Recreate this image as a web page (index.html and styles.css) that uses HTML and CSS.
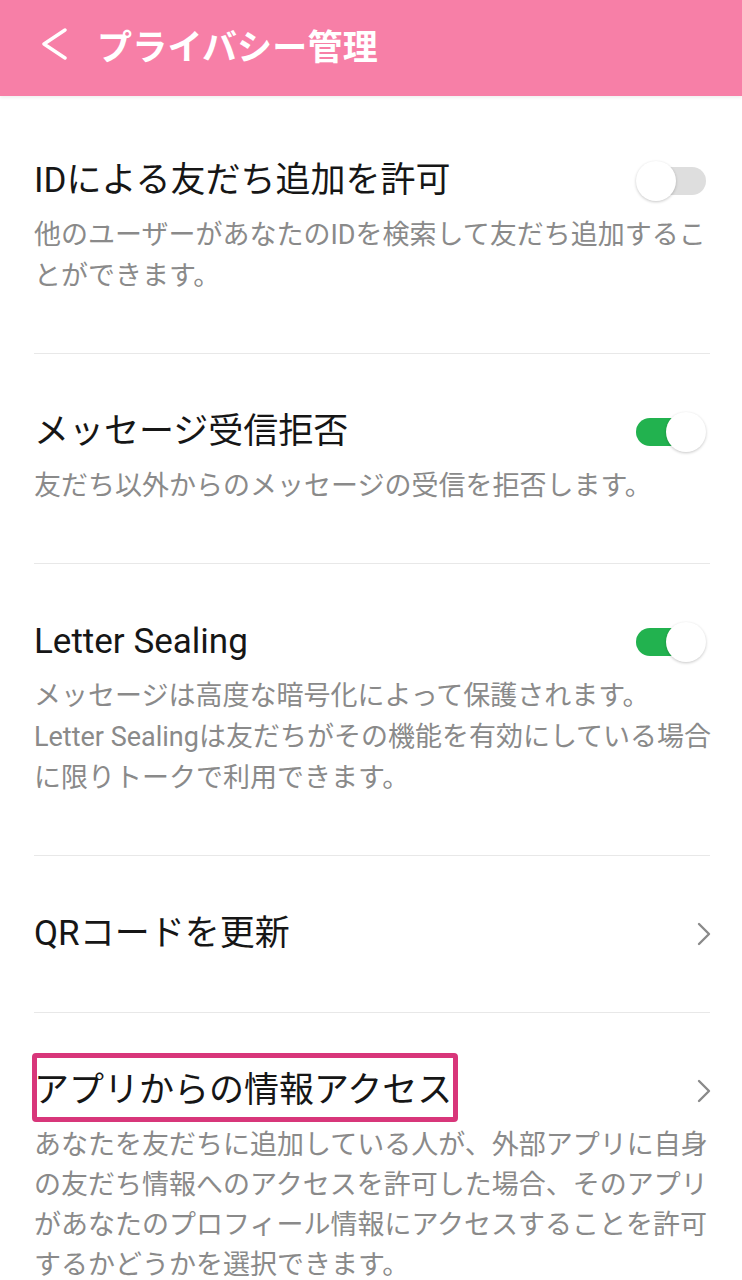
FILE: index.html
```html
<!DOCTYPE html>
<html lang="ja">
<head>
  <meta charset="UTF-8">
  <title>プライバシー管理</title>
  <link rel="stylesheet" href="styles.css">
</head>
<body>
  <header class="app-bar">
    <span class="back">
      <svg width="30" height="32" viewBox="0 0 30 32"><path d="M25 2 L4 16 L25 30" fill="none" stroke="#fff" stroke-width="3.4" stroke-linecap="round" stroke-linejoin="round"/></svg>
    </span>
    <h1 class="app-title">プライバシー管理</h1>
  </header>

  <ul class="settings">
    <li class="setting first">
      <div class="setting-head">
        <span class="setting-title">IDによる友だち追加を許可</span>
        <span class="switch"></span>
      </div>
      <p class="setting-desc">他のユーザーがあなたのIDを検索して友だち追加するこ<br>とができます。</p>
    </li>
    <li class="setting">
      <div class="setting-head">
        <span class="setting-title">メッセージ受信拒否</span>
        <span class="switch on"></span>
      </div>
      <p class="setting-desc">友だち以外からのメッセージの受信を拒否します。</p>
    </li>
    <li class="setting">
      <div class="setting-head">
        <span class="setting-title">Letter Sealing</span>
        <span class="switch on"></span>
      </div>
      <p class="setting-desc">メッセージは高度な暗号化によって保護されます。<br>Letter Sealingは友だちがその機能を有効にしている場合<br>に限りトークで利用できます。</p>
    </li>
    <li class="setting">
      <div class="setting-head">
        <span class="setting-title">QRコードを更新</span>
        <svg class="chevron" width="14" height="24" viewBox="0 0 14 24"><path d="M2 2 L12 12 L2 22" fill="none" stroke="#8a8a8a" stroke-width="2.4" stroke-linecap="round" stroke-linejoin="round"/></svg>
      </div>
    </li>
    <li class="setting">
      <div class="setting-head">
        <span class="setting-title marked">アプリからの情報アクセス</span>
        <svg class="chevron" width="14" height="24" viewBox="0 0 14 24"><path d="M2 2 L12 12 L2 22" fill="none" stroke="#8a8a8a" stroke-width="2.4" stroke-linecap="round" stroke-linejoin="round"/></svg>
      </div>
      <p class="setting-desc">あなたを友だちに追加している人が、外部アプリに自身<br>の友だち情報へのアクセスを許可した場合、そのアプリ<br>があなたのプロフィール情報にアクセスすることを許可<br>するかどうかを選択できます。</p>
    </li>
  </ul>
</body>
</html>
```

FILE: styles.css
```css
body {
  margin: 0;
  background: #fff;
  font-family: Roboto, "Noto Sans CJK JP", sans-serif;
  color: #161616;
}
.app-bar {
  height: 96px;
  box-sizing: border-box;
  padding: 0 0 8px 40px;
  background: #f77fa7;
  display: flex;
  align-items: center;
  gap: 27px;
  box-shadow: 0 2px 3px rgba(0,0,0,0.06);
}
.back {
  display: flex;
}
.app-title {
  margin: 0;
  color: #fff;
  font-size: 35px;
  font-weight: 700;
  letter-spacing: 0.2px;
}
.settings {
  list-style: none;
  margin: 0 32px 0 34px;
  padding: 0;
}
.setting {
  padding: 56px 0;
  border-bottom: 1px solid #e8e8e8;
}
.setting.first {
  padding-top: 63px;
}
.setting:last-child {
  padding-bottom: 0;
  border-bottom: none;
}
.setting-head {
  display: flex;
  align-items: center;
  justify-content: space-between;
  height: 44px;
}
.setting-title {
  font-size: 35px;
  line-height: 44px;
}
.setting-desc {
  margin: 12px 0 0;
  font-size: 27px;
  line-height: 41px;
  color: #8a8a8a;
  white-space: nowrap;
}
.setting:last-child .setting-desc {
  line-height: 40px;
}
.chevron {
  margin-right: -1px;
}
.marked {
  position: relative;
}
.marked::after {
  content: '';
  position: absolute;
  left: -2px;
  right: -6px;
  top: -16px;
  bottom: -9px;
  border: 5px solid #d8367a;
  border-radius: 4px;
}
.switch {
  position: relative;
  width: 70px;
  height: 40px;
  margin-right: 4px;
}
.switch::before {
  content: '';
  position: absolute;
  left: 8px;
  top: 6px;
  width: 62px;
  height: 28px;
  border-radius: 14px;
  background: #dedede;
}
.switch::after {
  content: '';
  position: absolute;
  left: 0;
  top: 0;
  width: 40px;
  height: 40px;
  border-radius: 50%;
  background: #fff;
  box-shadow: 0 1px 3px rgba(0,0,0,0.22);
}
.switch.on::before {
  left: 0;
  background: #22b24f;
}
.switch.on::after {
  left: 30px;
}
```
